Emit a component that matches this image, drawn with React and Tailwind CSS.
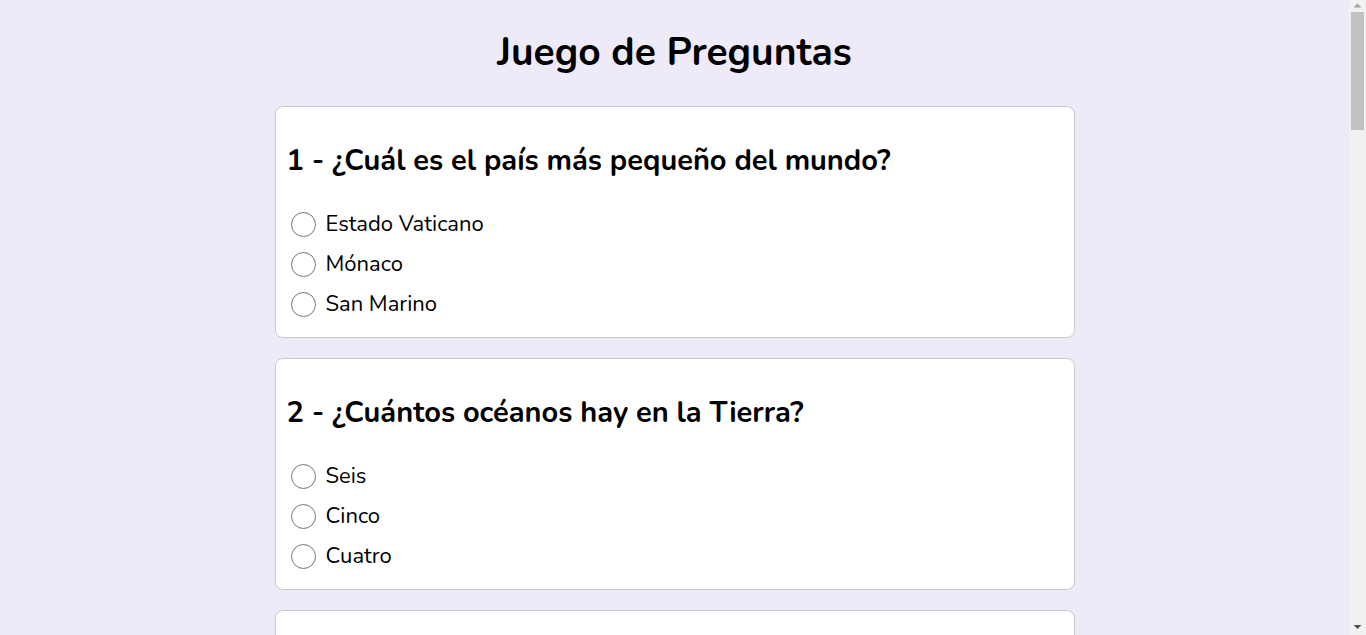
import { useState } from 'react';

const QUESTIONS = [
  { q: '¿Cuál es el país más pequeño del mundo?', options: ['Estado Vaticano', 'Mónaco', 'San Marino'] },
  { q: '¿Cuántos océanos hay en la Tierra?', options: ['Seis', 'Cinco', 'Cuatro'] },
  { q: '¿Cuál es el río más largo del mundo?', options: ['Amazonas', 'Nilo', 'Misisipi'] },
  { q: '¿Cuál es el planeta más grande del sistema solar?', options: ['Saturno', 'Júpiter', 'Neptuno'] },
  { q: '¿En qué año llegó el hombre a la Luna?', options: ['1969', '1972', '1965'] },
  { q: '¿Cuál es la capital de Australia?', options: ['Sídney', 'Melbourne', 'Canberra'] },
  { q: '¿Quién pintó la Mona Lisa?', options: ['Leonardo da Vinci', 'Miguel Ángel', 'Rafael'] },
  { q: '¿Cuál es el metal más abundante en la corteza terrestre?', options: ['Hierro', 'Aluminio', 'Cobre'] },
  { q: '¿Cuántos huesos tiene el cuerpo humano adulto?', options: ['206', '212', '198'] },
  { q: '¿Cuál es el idioma más hablado del mundo?', options: ['Inglés', 'Español', 'Chino mandarín'] },
  { q: '¿Cuál es el animal terrestre más rápido?', options: ['León', 'Guepardo', 'Gacela'] },
  { q: '¿Cuántos continentes hay en el mundo?', options: ['Cinco', 'Seis', 'Siete'] },
];

const font = { fontFamily: '"Nunito", Lato, "Noto Sans", sans-serif' };

// scrollbar drawn by hand, the browser here hides native ones
function ScrollBar() {
  return (
    <aside className="w-[17px] shrink-0 h-screen bg-[#F1F1F1] flex flex-col items-center">
      <svg width="17" height="12" viewBox="0 0 17 12" className="shrink-0">
        <path d="M4.5 7.5 L8.5 3.5 L12.5 7.5 Z" fill="#A3A3A3" />
      </svg>
      <div className="w-[13px] h-[118px] bg-[#C1C1C1] shrink-0" />
      <div className="flex-1" />
      <svg width="17" height="17" viewBox="0 0 17 17" className="shrink-0">
        <path d="M4.5 7 L12.5 7 L8.5 11 Z" fill="#505050" />
      </svg>
    </aside>
  );
}

export default function App() {
  const [answers, setAnswers] = useState({});

  return (
    <div className="h-screen flex overflow-hidden bg-[#EEEAF8]">
      <div className="flex-1 h-screen overflow-hidden">
        <main className="text-black pt-[29px] pb-[124px]" style={font}>
          <h1 className="text-center text-[39px] leading-[48px] font-bold mb-[29px]">Juego de Preguntas</h1>
          <div className="w-[800px] mx-auto flex flex-col gap-[20px]">
            {QUESTIONS.map((item, i) => (
              <section
                key={i}
                className="bg-white border border-[#C9C9CC] rounded-[8px] px-[11px] pt-[36px] pb-[13px]"
              >
                <h2 className="text-[29px] leading-[36px] font-bold mb-[25px]">
                  {i + 1} - {item.q}
                </h2>
                <div className="flex flex-col">
                  {item.options.map((opt) => (
                    <label key={opt} className="h-[40px] flex items-center gap-[10px] pl-[4px] text-[22px] cursor-pointer">
                      <input
                        type="radio"
                        name={`q${i}`}
                        checked={answers[i] === opt}
                        onChange={() => setAnswers({ ...answers, [i]: opt })}
                        className="appearance-none w-[25px] h-[25px] rounded-full border border-[#767676] bg-white checked:border-[7px] checked:border-[#6b5bd2]"
                      />
                      <span>{opt}</span>
                    </label>
                  ))}
                </div>
              </section>
            ))}
          </div>
        </main>
      </div>
      <ScrollBar />
    </div>
  );
}
